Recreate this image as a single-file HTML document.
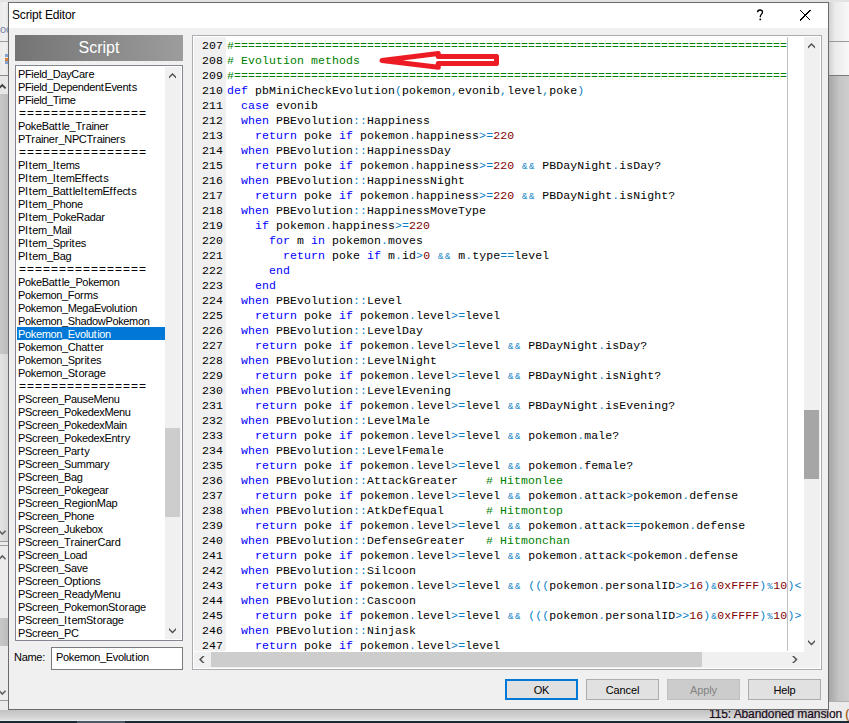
<!DOCTYPE html>
<html><head><meta charset="utf-8">
<style>
*{margin:0;padding:0;box-sizing:border-box}
html,body{width:849px;height:723px;overflow:hidden;background:#f0f0f0;position:relative;font-family:"Liberation Sans",sans-serif}
.abs{position:absolute}
/* background behind window */
#bgL{left:0;top:0;width:8px;height:723px;background:#ececec}
#bgR{left:829px;top:0;width:20px;height:723px;background:#ececec}
.sh{background:linear-gradient(to right,#d0d0d0,#ebebeb 6px,#f8f8f8)}
.gr{background:linear-gradient(to right,#a6a6a6,#c4c4c4 10px,#cdcdcd)}
.grl{background:linear-gradient(to right,#c8c8c8,#bcbcbc)}
.ln{background:#9a9a9a}
#taskdark{left:0;top:721px;width:849px;height:2px;background:#1b2b36}
/* window */
#win{left:8px;top:2px;width:821px;height:708px;border:1px solid #6b6b6b;background:#f0f0f0}
#title{left:9px;top:3px;width:819px;height:25px;background:#fff}
#titletext{left:12px;top:8px;font-size:12px;color:#000;white-space:pre;letter-spacing:-0.15px}
#help{left:756px;top:7px;font-size:15px;line-height:16px;color:#000}
/* script header */
#hdr{left:15px;top:35px;width:168px;height:26px;background:linear-gradient(to right,#747474,#9c9c9c);color:#fff;font-size:16px;text-align:center;line-height:26px}
/* listbox */
#lb{left:15px;top:65px;width:168px;height:576px;border:1px solid #828790;background:#fff;overflow:hidden}
#items{left:1px;top:1px;width:148px;font-size:11px;letter-spacing:-0.35px;line-height:13px;color:#000;white-space:pre}
.it{height:13px;line-height:15px;padding-left:1px}
.it.eq{font-size:12px;letter-spacing:1px;padding-left:2px}
.it.sel{background:#0078d7;color:#fff}
#items i,#nametext i{font-style:normal;letter-spacing:0.6px}
#items u,#nametext u{text-decoration:none;letter-spacing:0.2px}
#lbsb{left:165px;top:67px;width:16px;height:572px;background:#f0f0f0}
#lbthumb{left:165px;top:428px;width:15px;height:89px;background:#cdcdcd}
/* name */
#namelbl{left:14px;top:651px;font-size:11px;letter-spacing:-0.3px;color:#000;white-space:pre}
#namebox{left:51px;top:647px;width:132px;height:23px;border:1px solid #7a7a7a;background:#fff}
#nametext{left:56px;top:651px;font-size:11px;letter-spacing:-0.35px;color:#000;white-space:pre}
/* editor */
#ed{left:192px;top:35px;width:630px;height:635px;border:1px solid #abadb3;background:#fff}
#margin{left:194px;top:37px;width:32px;height:614px;background:#f0f0f0}
#nums{left:194px;top:38px;width:29px;height:613px;text-align:right;font-family:"Liberation Mono",monospace;font-size:11.5px;letter-spacing:0.1px;line-height:15px;color:#000;white-space:pre;overflow:hidden}
#codewrap{left:226px;top:37px;width:576px;height:614px;overflow:hidden}
#code{left:1px;top:1px;font-family:"Liberation Mono",monospace;font-size:11.5px;letter-spacing:0.1px;line-height:15px;color:#000;white-space:pre}
#code .k{color:#0000ff}
#code .c{color:#008000}
#code .n{color:#800000}
#code .o{color:#0a7fc6}
#code b{font-weight:normal;font-size:9px;display:inline-block;width:7px;text-align:center;letter-spacing:0;line-height:0}
#edge{left:787px;top:37px;width:1px;height:614px;background:#c0c0c0}
#vsb{left:804px;top:37px;width:16px;height:631px;background:#f0f0f0}
#vthumb{left:804px;top:410px;width:15px;height:69px;background:#a6a6a6}
#hsb{left:194px;top:652px;width:610px;height:16px;background:#f0f0f0}
#hthumb{left:211px;top:652px;width:491px;height:15px;background:#cdcdcd}
/* buttons */
.btn{top:679px;width:73px;height:21px;background:#e1e1e1;border:1px solid #adadad;font-size:11px;letter-spacing:-0.1px;text-align:center;line-height:21px;color:#000}
#ok{left:505px;border:2px solid #0078d7;line-height:19px}
#cancel{left:586px}
#apply{left:667px;background:#cccccc;border-color:#bfbfbf;color:#838383}
#helpb{left:748px}
#task{left:709px;top:707px;font-size:12px;line-height:14px;color:#1a0a1a;white-space:pre;letter-spacing:-0.1px;-webkit-text-stroke:0.2px #1a0a1a}
svg{position:absolute;overflow:visible}
</style></head><body>
<div class="abs" id="bgL"></div>
<div class="abs" style="left:0;top:0;width:8px;height:94px;background:linear-gradient(to right,#ebebeb,#f0f0f0 5px,#e4e4e4)"></div>
<div class="abs" style="left:0;top:23px;font-size:11px;line-height:13px;color:#7584a8;white-space:pre">oo</div>
<div class="abs" style="left:5px;top:54px;width:3px;height:3px;background:#86a0d0"></div>
<div class="abs" style="left:5px;top:58px;width:3px;height:3px;background:#d9813a"></div>
<div class="abs" style="left:5px;top:61px;width:3px;height:3px;background:#86a0d0"></div>
<div class="abs ln" style="left:0;top:41px;width:8px;height:1px"></div>
<div class="abs ln" style="left:0;top:75px;width:8px;height:1px;background:#8a8a8a"></div>
<div class="abs" style="left:0;top:76px;width:8px;height:18px;background:#e6e6e6"></div>
<div class="abs grl" style="left:0;top:94px;width:8px;height:260px"></div>
<div class="abs" style="left:0;top:354px;width:8px;height:187px;background:linear-gradient(to right,#e4e4e4,#d6d6d6)"></div>
<div class="abs ln" style="left:0;top:541px;width:8px;height:1px"></div>
<div class="abs ln" style="left:0;top:545px;width:8px;height:1px"></div>
<div class="abs grl" style="left:0;top:618px;width:8px;height:28px"></div>
<div class="abs ln" style="left:0;top:700px;width:8px;height:1px"></div>
<svg style="left:0;top:84px" width="8" height="5"><path d="M-1 4.3 L2.3 1 L5.6 4.3" fill="none" stroke="#404040" stroke-width="1.8"/></svg>
<svg style="left:0;top:530px" width="8" height="5"><path d="M-1 0.7 L2.3 4 L5.6 0.7" fill="none" stroke="#606060" stroke-width="1.6"/></svg>
<svg style="left:0;top:555px" width="8" height="5"><path d="M-1 4.3 L2.3 1 L5.6 4.3" fill="none" stroke="#606060" stroke-width="1.6"/></svg>
<svg style="left:0;top:690px" width="8" height="5"><path d="M-1 0.7 L2.3 4 L5.6 0.7" fill="none" stroke="#606060" stroke-width="1.6"/></svg>
<div class="abs" id="bgR"></div>
<div class="abs sh" style="left:829px;top:0;width:20px;height:41px"></div>
<div class="abs ln" style="left:829px;top:41px;width:20px;height:1px"></div>
<div class="abs sh" style="left:829px;top:42px;width:20px;height:33px"></div>
<div class="abs ln" style="left:829px;top:75px;width:20px;height:1px;background:#7a7a7a"></div>
<div class="abs gr" style="left:829px;top:76px;width:20px;height:625px"></div>
<div class="abs ln" style="left:829px;top:701px;width:20px;height:1px;background:#b0b0b0"></div>
<div class="abs" style="left:0;top:0;width:849px;height:2px;background:#e2e2e2"></div>
<div class="abs" style="left:0;top:710px;width:849px;height:11px;background:linear-gradient(#c2c2c2,#dadada 9px,#eeeeee)"></div>
<div class="abs" style="left:829px;top:702px;width:20px;height:19px;background:#ebebeb"></div>
<div class="abs" id="task">115: Abandoned mansion <span style="color:#c46a00">(</span></div>
<div class="abs" id="taskdark"></div>
<div class="abs" style="left:77px;top:721px;width:48px;height:2px;background:#4b5a66"></div>
<div class="abs" id="win"></div>
<div class="abs" id="title"></div>
<div class="abs" id="titletext">Script Editor</div>
<svg style="left:756px;top:9px" width="8" height="12"><path d="M1.6 3.2 C1.6 1.7 2.7 1 4 1 C5.5 1 6.5 1.9 6.5 3.2 C6.5 5 4.4 5.4 4.3 7.6 L4.3 8.2" stroke="#000" stroke-width="1.3" fill="none"/><circle cx="4.3" cy="10.4" r="0.95" fill="#000"/></svg>
<svg style="left:800px;top:10px" width="11" height="11" shape-rendering="crispEdges"><path d="M0 0 L10.2 10.2 M10.2 0 L0 10.2" stroke="#000" stroke-width="1.2"/></svg>

<div class="abs" id="hdr">Script</div>
<div class="abs" id="lb"><div class="abs" id="items"><div class="it">PField_DayCa<u>r</u>e</div><div class="it">PField_Dependen<i>t</i>Even<i>t</i>s</div><div class="it">PField_Time</div><div class="it eq">================</div><div class="it">PokeBa<i>t</i><i>t</i>le_T<u>r</u>aine<u>r</u></div><div class="it">PT<u>r</u>aine<u>r</u>_NPCT<u>r</u>aine<u>r</u>s</div><div class="it eq">================</div><div class="it">P<i>I</i><i>t</i>em_<i>I</i><i>t</i>ems</div><div class="it">P<i>I</i><i>t</i>em_<i>I</i><i>t</i>emE<i>f</i><i>f</i>ec<i>t</i>s</div><div class="it">P<i>I</i><i>t</i>em_Ba<i>t</i><i>t</i>le<i>I</i><i>t</i>emE<i>f</i><i>f</i>ec<i>t</i>s</div><div class="it">P<i>I</i><i>t</i>em_Phone</div><div class="it">P<i>I</i><i>t</i>em_PokeRada<u>r</u></div><div class="it">P<i>I</i><i>t</i>em_Mail</div><div class="it">P<i>I</i><i>t</i>em_Sp<u>r</u>i<i>t</i>es</div><div class="it">P<i>I</i><i>t</i>em_Bag</div><div class="it eq">================</div><div class="it">PokeBa<i>t</i><i>t</i>le_Pokemon</div><div class="it">Pokemon_Fo<u>r</u>ms</div><div class="it">Pokemon_MegaEvolu<i>t</i>ion</div><div class="it">Pokemon_ShadowPokemon</div><div class="it sel">Pokemon_Evolu<i>t</i>ion</div><div class="it">Pokemon_Cha<i>t</i><i>t</i>e<u>r</u></div><div class="it">Pokemon_Sp<u>r</u>i<i>t</i>es</div><div class="it">Pokemon_S<i>t</i>o<u>r</u>age</div><div class="it eq">================</div><div class="it">PSc<u>r</u>een_PauseMenu</div><div class="it">PSc<u>r</u>een_PokedexMenu</div><div class="it">PSc<u>r</u>een_PokedexMain</div><div class="it">PSc<u>r</u>een_PokedexEn<i>t</i><u>r</u>y</div><div class="it">PSc<u>r</u>een_Pa<u>r</u><i>t</i>y</div><div class="it">PSc<u>r</u>een_Summa<u>r</u>y</div><div class="it">PSc<u>r</u>een_Bag</div><div class="it">PSc<u>r</u>een_Pokegea<u>r</u></div><div class="it">PSc<u>r</u>een_RegionMap</div><div class="it">PSc<u>r</u>een_Phone</div><div class="it">PSc<u>r</u>een_Jukebox</div><div class="it">PSc<u>r</u>een_T<u>r</u>aine<u>r</u>Ca<u>r</u>d</div><div class="it">PSc<u>r</u>een_Load</div><div class="it">PSc<u>r</u>een_Save</div><div class="it">PSc<u>r</u>een_Op<i>t</i>ions</div><div class="it">PSc<u>r</u>een_ReadyMenu</div><div class="it">PSc<u>r</u>een_PokemonS<i>t</i>o<u>r</u>age</div><div class="it">PSc<u>r</u>een_<i>I</i><i>t</i>emS<i>t</i>o<u>r</u>age</div><div class="it">PSc<u>r</u>een_PC</div></div></div>
<div class="abs" id="lbsb"></div>
<div class="abs" id="lbthumb"></div>
<svg style="left:169px;top:73px" width="7" height="6"><polygon points="0,3.6 3.5,0 7,3.6 7,5.6 3.5,2.1 0,5.6" fill="#505050"/></svg>
<svg style="left:169px;top:628px" width="7" height="6"><polygon points="0,0 3.5,3.5 7,0 7,2 3.5,5.6 0,2" fill="#505050"/></svg>

<div class="abs" id="namelbl">Name:</div>
<div class="abs" id="namebox"></div>
<div class="abs" id="nametext">Pokemon_Evolu<i>t</i>ion</div>

<div class="abs" id="ed"></div>
<div class="abs" id="margin"></div>
<div class="abs" id="nums">207
208
209
210
211
212
213
214
215
216
217
218
219
220
221
222
223
224
225
226
227
228
229
230
231
232
233
234
235
236
237
238
239
240
241
242
243
244
245
246
247</div>
<div class="abs" id="codewrap"><div class="abs" id="code"><span class="c">#===============================================================================</span>
<span class="c"># Evolution methods</span>
<span class="c">#===============================================================================</span>
<span class="k">def</span> pbMiniCheckEvolution<span class="o">(</span>pokemon<span class="o">,</span>evonib<span class="o">,</span>level<span class="o">,</span>poke<span class="o">)</span>
  <span class="k">case</span> evonib
  <span class="k">when</span> PBEvolution<span class="o">:</span><span class="o">:</span>Happiness
    <span class="k">return</span> poke <span class="k">if</span> pokemon<span class="o">.</span>happiness<span class="o">&gt;</span><span class="o">=</span><span class="n">220</span>
  <span class="k">when</span> PBEvolution<span class="o">:</span><span class="o">:</span>HappinessDay
    <span class="k">return</span> poke <span class="k">if</span> pokemon<span class="o">.</span>happiness<span class="o">&gt;</span><span class="o">=</span><span class="n">220</span> <span class="o"><b>&amp;</b></span><span class="o"><b>&amp;</b></span> PBDayNight<span class="o">.</span>isDay?
  <span class="k">when</span> PBEvolution<span class="o">:</span><span class="o">:</span>HappinessNight
    <span class="k">return</span> poke <span class="k">if</span> pokemon<span class="o">.</span>happiness<span class="o">&gt;</span><span class="o">=</span><span class="n">220</span> <span class="o"><b>&amp;</b></span><span class="o"><b>&amp;</b></span> PBDayNight<span class="o">.</span>isNight?
  <span class="k">when</span> PBEvolution<span class="o">:</span><span class="o">:</span>HappinessMoveType
    <span class="k">if</span> pokemon<span class="o">.</span>happiness<span class="o">&gt;</span><span class="o">=</span><span class="n">220</span>
      <span class="k">for</span> m <span class="k">in</span> pokemon<span class="o">.</span>moves
        <span class="k">return</span> poke <span class="k">if</span> m<span class="o">.</span>id<span class="o">&gt;</span><span class="n">0</span> <span class="o"><b>&amp;</b></span><span class="o"><b>&amp;</b></span> m<span class="o">.</span>type<span class="o">=</span><span class="o">=</span>level
      <span class="k">end</span>
    <span class="k">end</span>
  <span class="k">when</span> PBEvolution<span class="o">:</span><span class="o">:</span>Level
    <span class="k">return</span> poke <span class="k">if</span> pokemon<span class="o">.</span>level<span class="o">&gt;</span><span class="o">=</span>level
  <span class="k">when</span> PBEvolution<span class="o">:</span><span class="o">:</span>LevelDay
    <span class="k">return</span> poke <span class="k">if</span> pokemon<span class="o">.</span>level<span class="o">&gt;</span><span class="o">=</span>level <span class="o"><b>&amp;</b></span><span class="o"><b>&amp;</b></span> PBDayNight<span class="o">.</span>isDay?
  <span class="k">when</span> PBEvolution<span class="o">:</span><span class="o">:</span>LevelNight
    <span class="k">return</span> poke <span class="k">if</span> pokemon<span class="o">.</span>level<span class="o">&gt;</span><span class="o">=</span>level <span class="o"><b>&amp;</b></span><span class="o"><b>&amp;</b></span> PBDayNight<span class="o">.</span>isNight?
  <span class="k">when</span> PBEvolution<span class="o">:</span><span class="o">:</span>LevelEvening
    <span class="k">return</span> poke <span class="k">if</span> pokemon<span class="o">.</span>level<span class="o">&gt;</span><span class="o">=</span>level <span class="o"><b>&amp;</b></span><span class="o"><b>&amp;</b></span> PBDayNight<span class="o">.</span>isEvening?
  <span class="k">when</span> PBEvolution<span class="o">:</span><span class="o">:</span>LevelMale
    <span class="k">return</span> poke <span class="k">if</span> pokemon<span class="o">.</span>level<span class="o">&gt;</span><span class="o">=</span>level <span class="o"><b>&amp;</b></span><span class="o"><b>&amp;</b></span> pokemon<span class="o">.</span>male?
  <span class="k">when</span> PBEvolution<span class="o">:</span><span class="o">:</span>LevelFemale
    <span class="k">return</span> poke <span class="k">if</span> pokemon<span class="o">.</span>level<span class="o">&gt;</span><span class="o">=</span>level <span class="o"><b>&amp;</b></span><span class="o"><b>&amp;</b></span> pokemon<span class="o">.</span>female?
  <span class="k">when</span> PBEvolution<span class="o">:</span><span class="o">:</span>AttackGreater    <span class="c"># Hitmonlee</span>
    <span class="k">return</span> poke <span class="k">if</span> pokemon<span class="o">.</span>level<span class="o">&gt;</span><span class="o">=</span>level <span class="o"><b>&amp;</b></span><span class="o"><b>&amp;</b></span> pokemon<span class="o">.</span>attack<span class="o">&gt;</span>pokemon<span class="o">.</span>defense
  <span class="k">when</span> PBEvolution<span class="o">:</span><span class="o">:</span>AtkDefEqual      <span class="c"># Hitmontop</span>
    <span class="k">return</span> poke <span class="k">if</span> pokemon<span class="o">.</span>level<span class="o">&gt;</span><span class="o">=</span>level <span class="o"><b>&amp;</b></span><span class="o"><b>&amp;</b></span> pokemon<span class="o">.</span>attack<span class="o">=</span><span class="o">=</span>pokemon<span class="o">.</span>defense
  <span class="k">when</span> PBEvolution<span class="o">:</span><span class="o">:</span>DefenseGreater   <span class="c"># Hitmonchan</span>
    <span class="k">return</span> poke <span class="k">if</span> pokemon<span class="o">.</span>level<span class="o">&gt;</span><span class="o">=</span>level <span class="o"><b>&amp;</b></span><span class="o"><b>&amp;</b></span> pokemon<span class="o">.</span>attack<span class="o">&lt;</span>pokemon<span class="o">.</span>defense
  <span class="k">when</span> PBEvolution<span class="o">:</span><span class="o">:</span>Silcoon
    <span class="k">return</span> poke <span class="k">if</span> pokemon<span class="o">.</span>level<span class="o">&gt;</span><span class="o">=</span>level <span class="o"><b>&amp;</b></span><span class="o"><b>&amp;</b></span> <span class="o">(</span><span class="o">(</span><span class="o">(</span>pokemon<span class="o">.</span>personalID<span class="o">&gt;</span><span class="o">&gt;</span><span class="n">16</span><span class="o">)</span><span class="o"><b>&amp;</b></span><span class="n">0xFFFF</span><span class="o">)</span><span class="o"><b>%</b></span><span class="n">10</span><span class="o">)</span><span class="o">&lt;</span><span class="n">5</span>
  <span class="k">when</span> PBEvolution<span class="o">:</span><span class="o">:</span>Cascoon
    <span class="k">return</span> poke <span class="k">if</span> pokemon<span class="o">.</span>level<span class="o">&gt;</span><span class="o">=</span>level <span class="o"><b>&amp;</b></span><span class="o"><b>&amp;</b></span> <span class="o">(</span><span class="o">(</span><span class="o">(</span>pokemon<span class="o">.</span>personalID<span class="o">&gt;</span><span class="o">&gt;</span><span class="n">16</span><span class="o">)</span><span class="o"><b>&amp;</b></span><span class="n">0xFFFF</span><span class="o">)</span><span class="o"><b>%</b></span><span class="n">10</span><span class="o">)</span><span class="o">&gt;</span><span class="o">=</span><span class="n">5</span>
  <span class="k">when</span> PBEvolution<span class="o">:</span><span class="o">:</span>Ninjask
    <span class="k">return</span> poke <span class="k">if</span> pokemon<span class="o">.</span>level<span class="o">&gt;</span><span class="o">=</span>level</div></div>
<div class="abs" id="edge"></div>
<div class="abs" id="vsb"></div>
<div class="abs" id="vthumb"></div>
<div class="abs" id="hsb"></div>
<div class="abs" id="hthumb"></div>
<svg style="left:808px;top:43px" width="7" height="6"><polygon points="0,3.6 3.5,0 7,3.6 7,5.6 3.5,2.1 0,5.6" fill="#505050"/></svg>
<svg style="left:808px;top:640px" width="7" height="6"><polygon points="0,0 3.5,3.5 7,0 7,2 3.5,5.6 0,2" fill="#505050"/></svg>
<svg style="left:199px;top:656px" width="6" height="7"><polygon points="3.6,0 0,3.5 3.6,7 5.6,7 2.1,3.5 5.6,0" fill="#505050"/></svg>
<svg style="left:792px;top:656px" width="6" height="7"><polygon points="2,0 5.6,3.5 2,7 0,7 3.5,3.5 0,0" fill="#505050"/></svg>

<svg style="left:0;top:0" width="849" height="723"><path fill="none" stroke="#ed1c24" stroke-width="5" stroke-linejoin="round" stroke-linecap="round" d="M382 60.4 L438.3 53.5 L438.3 56.5 L496.5 56.5 L496.5 63.4 L438.3 63.4 L438.3 67.2 Z"/></svg>

<div class="abs btn" id="ok">OK</div>
<div class="abs btn" id="cancel">Cancel</div>
<div class="abs btn" id="apply">Apply</div>
<div class="abs btn" id="helpb">Help</div>
</body></html>
